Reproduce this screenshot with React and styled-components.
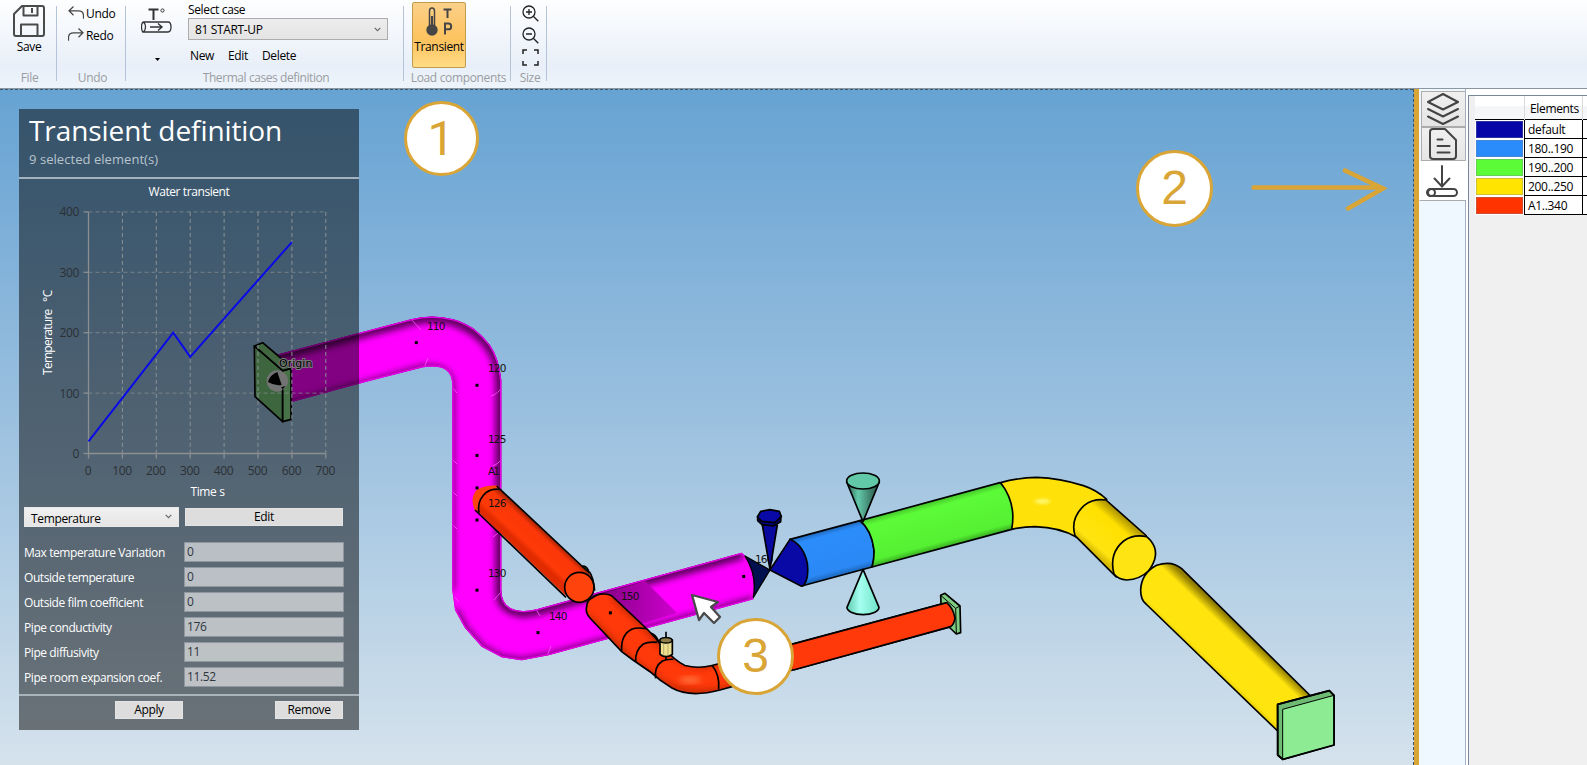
import React from "react";
import styled, { createGlobalStyle } from "styled-components";

const GlobalStyle = createGlobalStyle`
  * { box-sizing: border-box; }
  html, body { margin: 0; padding: 0; overflow: hidden; }
  body {
    font-family: "Open Sans", "Noto Sans", sans-serif;
    font-size: 12px;
    letter-spacing: -0.35px;
    color: #000;
    background: #f0f0f0;
  }
  button, input { font: inherit; letter-spacing: inherit; }
`;

const GOLD = "#d9a536";

const Window = styled.div`
  width: 1587px;
  height: 765px;
  display: flex;
  flex-direction: column;
  overflow: hidden;
`;

/* ---------- Ribbon ---------- */

const Ribbon = styled.header`
  height: 89px;
  flex: none;
  display: flex;
  background: linear-gradient(#fdfefe 0, #f4f7fc 35%, #e8eff8 75%, #eef4fb 100%);
  border-bottom: 1px solid #8d979f;
`;

const RibbonGroup = styled.section`
  position: relative;
  width: ${(p) => p.$width}px;
  height: 87px;
  display: flex;
  flex-direction: column;
  background: linear-gradient(#b4c3d8, #b4c3d8) right 6px / 1px 75px no-repeat;
`;

const GroupBody = styled.div`
  height: 69px;
  display: flex;
  padding: ${(p) => p.$pad || "0"};
`;

const GroupLabel = styled.div`
  padding-left: 2px;
  line-height: 18px;
  text-align: center;
  white-space: nowrap;
  color: #9a9da1;
  letter-spacing: ${(p) => p.$spacing || "-0.35px"};
`;

const SaveButton = styled.button`
  flex: 1;
  display: flex;
  flex-direction: column;
  align-items: center;
  border: 0;
  padding: 5px 0 0 1px;
  background: none;
  line-height: 20px;
`;

const Stack = styled.div`
  display: flex;
  flex-direction: column;
  align-items: ${(p) => p.$align || "stretch"};
  gap: ${(p) => p.$gap || 0}px;
`;

const InlineCommand = styled.div`
  display: flex;
  align-items: center;
  gap: 2px;
  height: 20px;
`;

const CaseIcon = styled.div`
  width: 62px;
  padding: 8px 0 0 15px;
  display: flex;
  flex-direction: column;
  gap: 24px;
`;

const CaseCaption = styled.div`
  height: 18px;
  padding-top: 1px;
  line-height: 18px;
`;

const CaseSelect = styled.div`
  width: 200px;
  height: 22px;
  display: flex;
  align-items: center;
  justify-content: space-between;
  padding: 0 6px;
  border: 1px solid #acacac;
  background: linear-gradient(#ededed, #e4e4e4);
`;

const CaseActions = styled.div`
  display: flex;
  gap: 14px;
  padding: 7px 0 0 2px;
  line-height: 18px;
`;

const ToggleButton = styled.button`
  width: 54px;
  height: 66px;
  display: flex;
  flex-direction: column;
  align-items: center;
  padding: 4px 0 0;
  border: 1px solid #c29b4d;
  border-radius: 2px;
  background: linear-gradient(#fbd08a, #fdc566 45%, #fdc35f 60%, #ffdc86);
  line-height: 20px;
`;

/* ---------- Workspace ---------- */

const Workspace = styled.main`
  flex: 1;
  display: flex;
  min-height: 0;
`;

const Viewport = styled.div`
  position: relative;
  width: 1414px;
  border-right: 1px dashed #3b5064;
  background: linear-gradient(#66a3d3 0%, #8ab6db 33%, #b0cde4 68%, #d5e2ec 100%);
  &::before {
    content: "";
    position: absolute;
    inset: 0 0 auto 0;
    border-top: 1px dashed #3f566b;
  }
`;

const Scene = styled.svg`
  display: block;
  width: 1413px;
  height: 676px;
`;

const Splitter = styled.div`
  width: 5px;
  background: ${GOLD};
`;

const TabStrip = styled.nav`
  width: 47px;
  padding: 2px 0 0;
  background: #eff7ff;
  border-right: 1px solid #a5afbd;
`;

const SideTab = styled.div`
  height: ${(p) => p.$height}px;
  display: flex;
  align-items: center;
  justify-content: center;
  padding-right: 2px;
  margin-left: ${(p) => (p.$active ? 0 : 2)}px;
  margin-right: ${(p) => (p.$active ? -1 : 0)}px;
  border: 1px solid #acacac;
  border-left-color: ${(p) => (p.$active ? "#fff" : "#acacac")};
  border-right: 0;
  border-top-color: ${(p) => (p.$active ? "#fff" : "#acacac")};
  background: ${(p) => (p.$active ? "#fff" : "linear-gradient(#f0f0f0, #e5e5e5)")};
`;

const LegendPane = styled.aside`
  flex: 1;
  padding: 6px 0 0 2px;
  background: #fff;
`;

const LegendFrame = styled.div`
  height: 100%;
  padding-left: 6px;
  border-left: 1px solid #77889b;
  border-top: 1px solid #77889b;
  background: #f0f0f0;
`;

const LegendTable = styled.div`
  width: 112px;
  background: #fff;
`;

const LegendHeader = styled.div`
  display: grid;
  grid-template-columns: 50px 58px 4px;
  height: 23px;
  line-height: 26px;
  background: linear-gradient(#fff 45%, #f4f5f7 46%, #f7f8fa);
  > * { border-right: 1px solid #d8dadd; padding-left: 5px; }
  > :last-child { border-right: 0; }
`;

const LegendRow = styled.div`
  display: grid;
  grid-template-columns: 50px 58px 4px;
  height: 19px;
  line-height: 19px;
  border-top: 1px solid #000;
  &:last-child { height: 20px; border-bottom: 1px solid #000; }
  > * { border-right: 1px solid #000; }
  > :last-child { border-right: 0; }
`;

const SwatchCell = styled.div`
  display: grid;
`;

const Swatch = styled.div`
  background: ${(p) => p.$color};
  border: 1px solid #fff;
  box-shadow: inset 0 0 0 1px rgba(120, 130, 140, 0.35);
`;

const LegendName = styled.div`
  padding-left: 3px;
  letter-spacing: -0.3px;
`;

/* ---------- Transient panel ---------- */

const Panel = styled.section`
  position: absolute;
  left: 19px;
  top: 20px;
  width: 340px;
  height: 621px;
  display: flex;
  flex-direction: column;
  background: rgba(0, 0, 0, 0.49);
  color: #fff;
`;

const PanelHeader = styled.div`
  height: 70px;
  padding: 0 10px;
  border-bottom: 2px solid #a3b3c0;
`;

const PanelTitle = styled.h1`
  margin: 0;
  font-size: 28px;
  font-weight: 400;
  line-height: 42px;
  letter-spacing: -0.08px;
  white-space: nowrap;
`;

const PanelSubtitle = styled.div`
  font-size: 13px;
  line-height: 16px;
  letter-spacing: 0.05px;
  color: #b9c3cc;
`;

const Chart = styled.svg`
  display: block;
  width: 340px;
  height: 327px;
  flex: none;
`;

const ControlsRow = styled.div`
  display: grid;
  grid-template-columns: 155px 158px;
  align-items: center;
  gap: 6px;
  padding: 1px 0 0 5px;
`;

const KindSelect = styled.div`
  height: 20px;
  display: flex;
  justify-content: space-between;
  padding: 1px 6px 0;
  line-height: 20px;
  overflow: hidden;
  color: #000;
  border: 1px solid #e8e8e8;
  background: linear-gradient(#f0f0f0, #e5e5e5);
  > svg { margin-top: 5px; }
`;

const PlainButton = styled.button`
  width: ${(p) => (p.$width ? p.$width + "px" : "auto")};
  height: 18px;
  padding: 0;
  border: 1px solid #e4e4e4;
  background: #dddddd;
  color: #000;
  line-height: 16px;
`;

const Fields = styled.div`
  display: grid;
  grid-template-columns: 160px 160px;
  grid-auto-rows: 20px;
  row-gap: 5px;
  padding: 15px 0 0 5px;
`;

const FieldLabel = styled.label`
  line-height: 22px;
  white-space: nowrap;
  letter-spacing: -0.42px;
`;

const FieldValue = styled.div`
  padding-left: 2px;
  border: 1px solid #8f98a1;
  background: rgba(255, 255, 255, 0.58);
  color: #2f363d;
  line-height: 18px;
`;

const PanelFooter = styled.div`
  display: flex;
  justify-content: space-between;
  height: 36px;
  margin-top: 7px;
  padding: 5px 16px 0 96px;
  border-top: 2px solid #a9b3ba;
`;

/* ---------- Annotations ---------- */

const Callout = styled.div`
  position: absolute;
  left: ${(p) => p.$x - p.$size / 2}px;
  top: ${(p) => p.$y - p.$size / 2}px;
  width: ${(p) => p.$size}px;
  height: ${(p) => p.$size}px;
  display: flex;
  align-items: center;
  justify-content: center;
  border: 3px solid ${GOLD};
  border-radius: 50%;
  background: #fff;
  color: ${GOLD};
  font-family: ${(p) => (p.$plain ? "Roboto" : '"Liberation Sans"')}, Arial, sans-serif;
  font-size: 48px;
  line-height: 1;
  letter-spacing: 0;
`;

const Arrow = styled.svg`
  position: absolute;
  left: 1249px;
  top: 76px;
`;

/* ---------- Icons ---------- */

const SaveIcon = () => (
  <svg width="32" height="32" viewBox="0 0 32 32" fill="none" stroke="#4a4a4a" strokeWidth="2" strokeLinejoin="round">
    <path d="M9 1h20q2 0 2 2v26q0 2-2 2H3q-2 0-2-2V9z" />
    <path d="M10.500 1v9.500h14V1M19 3v5M8 31V19.500h16.500V31" />
  </svg>
);

const UndoIcon = ({ redo }) => (
  <svg width="16" height="14" viewBox="0 0 16 14" fill="none" stroke="#444" strokeWidth="1.200">
    <path transform={redo ? "translate(16 0) scale(-1 1)" : undefined} d="M5.500 .5 1 4.800l4.500 4.400M1 4.800h9.500q5 0 5 5v3" />
  </svg>
);

const CaseGlyph = () => (
  <svg width="31" height="26" viewBox="0 0 31 26" fill="none" stroke="#333">
    <path d="M7.500 1.500h10M12.500 1v11" strokeWidth="2" />
    <circle cx="21.500" cy="2.500" r="1.600" strokeWidth="1" />
    <path d="M2.500 14H27q3 0 3 5t-3 5H2.500q2-2 2-5t-2-5q-2 .5-2 5t2 5" strokeWidth="1.300" />
    <path d="M9 19h12M17 15.500l4 3.500-4 3.500" strokeWidth="1.400" />
  </svg>
);

const CaretIcon = () => (
  <svg width="31" height="4">
    <path d="M14 0h5l-2.500 3z" />
  </svg>
);

const Chevron = () => (
  <svg width="7" height="5" viewBox="0 0 7 5" fill="none" stroke="#666" strokeWidth="1.100">
    <path d="M.7.8 3.500 3.600 6.300.8" />
  </svg>
);

const TransientIcon = () => (
  <svg width="27" height="30" viewBox="0 0 27 30" fill="none" stroke="#454545">
    <path d="M3.500 19V4q0-3 2.500-3t2.500 3v15" strokeWidth="1.500" />
    <path d="M6 9v12" strokeWidth="2.200" />
    <circle cx="6" cy="23" r="5.700" fill="#454545" stroke="none" />
    <path d="M17.500 2.500h8M21.500 2v9" strokeWidth="2" />
    <path d="M19 27.500V16.500h3.500q2.700 0 2.700 2.900t-2.700 2.900H19" strokeWidth="2" />
  </svg>
);

const ZoomIcon = ({ plus }) => (
  <svg width="17" height="17" viewBox="0 0 17 17" fill="none" stroke="#222" strokeWidth="1.300">
    <circle cx="7" cy="7" r="6" />
    <path d={plus ? "M11.300 11.300l5 5M4 7h6M7 4v6" : "M11.300 11.300l5 5M4 7h6"} />
  </svg>
);

const FitIcon = () => (
  <svg width="17" height="17" viewBox="0 0 17 17" fill="none" stroke="#222" strokeWidth="1.500">
    <path d="M1 5V1h4M12 1h4v4M16 12v4h-4M5 16H1v-4" />
  </svg>
);

const LayersIcon = () => (
  <svg width="34" height="32" viewBox="0 0 34 32" fill="none" stroke="#444" strokeWidth="2" strokeLinejoin="round" strokeLinecap="round">
    <path d="M17 1 32 9 17 16.500 2 9zM2 16l15 7.500L32 16M2 23.500 17 31l15-7.500" />
  </svg>
);

const NoteIcon = () => (
  <svg width="28" height="32" viewBox="0 0 28 32" fill="none" stroke="#444" strokeWidth="2" strokeLinejoin="round" strokeLinecap="round">
    <path d="M4 1h12l11 11v16q0 3-3 3H4q-3 0-3-3V4q0-3 3-3zM8.500 11.500h5M8.500 18h12M8.500 24.500h12" />
  </svg>
);

const LoadIcon = () => (
  <svg width="32" height="32" viewBox="0 0 32 32" fill="none" stroke="#444" strokeWidth="2" strokeLinecap="round">
    <path d="M16 1v20M8.500 13.500 16 21.500l7.500-8" />
    <rect x="1" y="24" width="30" height="7" rx="3.500" />
    <circle cx="5.500" cy="27.500" r="3.500" />
  </svg>
);

/* ---------- Chart ---------- */

const X_TICKS = [0, 100, 200, 300, 400, 500, 600, 700];
const Y_TICKS = [0, 100, 200, 300, 400];
const SERIES = [[0, 20], [250, 200], [300, 160], [600, 350]];
const sx = (v) => 69.5 + v * 0.339;
const sy = (v) => 274.5 - v * 0.604;

const TransientChart = () => (
  <Chart viewBox="0 0 340 327" fontSize="12">
    <text x="170" y="17" textAnchor="middle" fill="#fff" fontWeight="500" textLength="81">Water transient</text>
    <g stroke="#8b9294" strokeDasharray="4 3">
      {X_TICKS.slice(1).map((v) => <path key={v} d={`M${sx(v)} ${sy(400)}V${sy(0)}`} />)}
      {Y_TICKS.slice(1).map((v) => <path key={v} d={`M${sx(0)} ${sy(v)}H${sx(700)}`} opacity=".7" />)}
    </g>
    <g stroke="#8b8f91" strokeWidth="1.300">
      <path d={`M${sx(0)} ${sy(400)}V${sy(0)}H${sx(700)}`} fill="none" />
      {X_TICKS.map((v) => <path key={v} d={`M${sx(v)} ${sy(0)}v5`} />)}
      {Y_TICKS.map((v) => <path key={v} d={`M${sx(0)} ${sy(v)}h-5`} />)}
    </g>
    <g fill="#2b3035" letterSpacing="-0.350">
      {X_TICKS.map((v) => <text key={v} x={sx(v) - 0.5} y="296" textAnchor="middle">{v}</text>)}
      {Y_TICKS.map((v) => <text key={v} x="60" y={sy(v) + 4.5} textAnchor="end">{v}</text>)}
    </g>
    <polyline fill="none" stroke="#0a0ae8" strokeWidth="2" points={SERIES.map(([t, c]) => `${sx(t)},${sy(c)}`).join(" ")} />
    <g fill="#fff" fontWeight="500">
      <text x="188.500" y="317" textAnchor="middle" textLength="34">Time s</text>
      <text transform="translate(33 196) rotate(-90)" textLength="66">Temperature</text>
      <text transform="translate(33 123) rotate(-90)" textLength="12">°C</text>
    </g>
  </Chart>
);

/* ---------- Piping model ---------- */

const MAIN_RUN =
  "M272 356 370 330 411 319.300Q431.700 313.500 453.300 319.300 463 322 473.300 328.300 482 335 490 345 499 358 501.300 380V590Q501.500 609 520 610.700 528 611.500 536.700 609.300L741.700 552.700Q750 558 754 575 756 590 753.300 599.300L548.300 655.300 521.700 660.300 501.700 657.300 481.700 646.700 465 628 455 610 452.300 590V384Q451.700 368 436 366.700 430 366 423 367.300L370 380.700 286 403.500Z";

const BRANCH =
  "M586.700 606.700Q587 600 592 598 598 593.500 604 594 610 594 613 597L648 630Q655 637 661 645 675 661 685 665.500 698 669 712 665.500L946.700 602.700Q952 606 955 617 954 624 950.700 626.700L720 690Q690 698 672 688 660 681 650 671.700L633 660 621.700 651.700 590 618Q585 612 586.700 606.700Z";

const LABELS = [
  ["110", 427, 330], ["120", 488, 372], ["125", 488, 443], ["A1", 488, 475],
  ["126", 488, 507], ["130", 488, 577], ["140", 549, 620], ["150", 621, 600],
];

const NODES = [[416.3, 342.6], [477, 385.3], [477, 455.4], [477, 487.9], [477, 520], [477, 590.2], [538, 632.6], [610.4, 612.8], [743.7, 576.5]];

const PipingModel = () => (
  <Scene viewBox="0 89 1413 676">
    <defs>
      <filter id="soft" x="-20%" y="-20%" width="140%" height="140%"><feGaussianBlur stdDeviation="3" /></filter>
      <filter id="softWide" x="-50%" y="-50%" width="200%" height="200%"><feGaussianBlur stdDeviation="5" /></filter>
      <clipPath id="mainClip"><path d={MAIN_RUN} /></clipPath>
      <clipPath id="branchClip"><path d={BRANCH} /></clipPath>
      <linearGradient id="shadow" x1="0" x2="1"><stop offset="0" stopColor="#7a007a" /><stop offset="1" stopColor="#cf00cf" /></linearGradient>
      <linearGradient id="red" gradientUnits="userSpaceOnUse" x1="290" y1="210" x2="345" y2="150"><stop offset="0" stopColor="#e02b00" /><stop offset=".2" stopColor="#ff3a08" /><stop offset=".75" stopColor="#fb3608" /><stop offset="1" stopColor="#8f1f00" /></linearGradient>
      <linearGradient id="blue" gradientUnits="userSpaceOnUse" x1="415" y1="237" x2="453" y2="378"><stop offset="0" stopColor="#1f66b8" /><stop offset=".12" stopColor="#2b8dfb" /><stop offset=".85" stopColor="#2b88f5" /><stop offset="1" stopColor="#1a62b4" /></linearGradient>
      <linearGradient id="green" gradientUnits="userSpaceOnUse" x1="720" y1="155" x2="758" y2="295"><stop offset="0" stopColor="#45c42a" /><stop offset=".14" stopColor="#5cfb38" /><stop offset=".86" stopColor="#55f032" /><stop offset="1" stopColor="#37a820" /></linearGradient>
      <linearGradient id="yellow" gradientUnits="userSpaceOnUse" x1="690" y1="650" x2="790" y2="545"><stop offset="0" stopColor="#e6cb00" /><stop offset=".1" stopColor="#ffe510" /><stop offset=".8" stopColor="#ffe40d" /><stop offset="1" stopColor="#917e00" /></linearGradient>
      <linearGradient id="yellowShort" gradientUnits="userSpaceOnUse" x1="345" y1="310" x2="437" y2="204"><stop offset="0" stopColor="#d8bb00" /><stop offset=".15" stopColor="#ffe410" /><stop offset=".75" stopColor="#ffe000" /><stop offset="1" stopColor="#aa9200" /></linearGradient>
      <linearGradient id="coneTop" x1="0" x2="1"><stop offset="0" stopColor="#285b4c" /><stop offset=".35" stopColor="#63c8a9" /><stop offset="1" stopColor="#254d42" /></linearGradient>
      <linearGradient id="coneBottom" x1="0" x2="1"><stop offset="0" stopColor="#5fcbb0" /><stop offset=".4" stopColor="#a5fff0" /><stop offset="1" stopColor="#71e2c8" /></linearGradient>
    </defs>

    {/* main run */}
    <path d={MAIN_RUN} fill="#ff00ff" />
    <g clipPath="url(#mainClip)" fill="none">
      <path d="M272 356 370 330 411 319.300Q431.700 313.500 453.300 319.300 482 330 493 350 501.700 363 501.700 385V590Q501 607 520 610.700 528 611.500 536.700 609.300L741.700 552.700" stroke="#600060" strokeWidth="13" filter="url(#soft)" />
      <path d="M286 404.500 370 381.700 423 367.300Q449 365 452 384V590" stroke="#800080" strokeWidth="6" filter="url(#soft)" />
      <path d="M753 600 548.300 656.300 521.700 661.300 501.700 658.300 481.700 647.700 465 629 455 610" stroke="#800080" strokeWidth="8" filter="url(#soft)" />
      <path d="M590 598 645 581 677 613 624 629Z" fill="url(#shadow)" />
      <path d="M411 319 421 330M428 358 424 368M452 387 457 393M491 396Q498 394 502 387M452 459 457 464M493 466Q498 464 502 459M452 491 457 496M452 524 457 529M493 537 502 530M452 594 459 602M494 600 501 592M536 609 540 616M551 646 547 656" stroke="#ff55ff" strokeWidth="1" opacity=".8" />
      <path d={MAIN_RUN} stroke="#e600e6" strokeWidth="2.600" />
    </g>

    {/* origin anchor */}
    <g transform="translate(0 300) scale(.33333)" stroke="#000" strokeWidth="5" strokeLinejoin="round">
      <path d="M763 138 848 212V365L765 290Z" fill="#78c97d" />
      <path d="M848 212 873 205V358L848 365Z" fill="#8ce08c" />
      <path d="M763 138 788 128 835 168 873 205 848 212Z" fill="#80ca80" />
      <circle cx="832" cy="243" r="32" fill="#e2e2e2" stroke="none" />
      <path d="M832 216Q810 224 804 246 822 258 845 255Z" fill="#000" stroke="none" />
      <path d="M843 262 857 258 848 268Z" fill="#000" stroke="none" />
      <path d="M848 268V365" strokeWidth="3" />
    </g>
    <text x="279" y="367" fontFamily="DejaVu Sans, sans-serif" fontSize="11" textLength="33" stroke="#eee" strokeWidth="2" paintOrder="stroke">Origin</text>

    {/* upper branch */}
    <g transform="translate(430 480) scale(.33333)" stroke="#000" strokeWidth="5" strokeLinejoin="round" fill="none">
      <path d="M135 92Q118 55 140 30 165 15 205 17L215 40 160 100Z" fill="#ff430c" stroke="none" />
      <path d="M450 262Q470 250 478 280" fill="#266855" />
      <path d="M147 98Q140 62 168 38 185 25 210 28L478 281Q492 293 490 325L480 355 405 345Z" fill="url(#red)" stroke="none" />
      <path d="M135 90 408 352M200 18 478 279M147 98Q140 62 168 38 185 25 210 28" />
      <ellipse cx="448" cy="322" rx="44" ry="45" fill="#ff430c" />
      <path d="M478 275Q490 290 494 332" />
    </g>

    {/* lower branch */}
    <g transform="translate(430 480) scale(.33333)" stroke="#000" strokeWidth="5">
      <path d="M648 458Q680 455 690 498L665 490Z" fill="#6fd8ae" />
    </g>
    <path d={BRANCH} fill="#ff390a" />
    <g clipPath="url(#branchClip)" fill="none">
      <path d="M613 596 648 629 661 644Q683 665 705 665L950 601" stroke="#a82300" strokeWidth="5" filter="url(#soft)" />
      <path d="M588 617 633 662 655 677Q676 697 720 691L950 628" stroke="#b52800" strokeWidth="5" filter="url(#soft)" />
      <ellipse cx="690" cy="680" rx="11" ry="3" fill="#ff7a45" filter="url(#soft)" />
    </g>
    <path d={BRANCH} fill="none" stroke="#000" strokeWidth="1.700" />
    <g transform="translate(430 480) scale(.33333)" fill="none" stroke="#000" strokeWidth="5">
      <path d="M575 513Q572 465 605 448 620 441 648 446M617 546Q615 510 640 492 655 484 682 487M677 595Q672 560 697 543 710 537 730 538" />
      <path d="M846 556Q870 585 866 628" />
      <path d="M708 455V480M708 525V540" />
      <path d="M690 480V523Q708 537 727 523V480Q708 465 690 480Z" fill="#eee090" />
      <ellipse cx="708" cy="481" rx="18" ry="8" fill="#8c7e46" strokeWidth="4" />
      <path d="M701 490V527M714 490V527" stroke="#9f955c" strokeWidth="2" />
    </g>

    <text x="755" y="563" fontFamily="DejaVu Sans, sans-serif" fontSize="10.500" fill="#111" textLength="18">160</text>

    {/* valve, reducers and straight pipes */}
    <g transform="translate(690 450) scale(.33333)" stroke="#000" strokeWidth="5" strokeLinejoin="round">
      <path d="M752 436 765 430 810 468 812 548 799 552 755 510Z" fill="#7dcc82" />
      <path d="M752 436 797 475 799 552M797 475 810 468" fill="none" strokeWidth="3" />
      <path d="M310 582 770 458Q790 475 795 505 792 523 782 530L310 660Z" fill="#ff390a" stroke="none" />
      <path d="M310 582 770 458Q790 475 795 505 792 523 782 530L310 660" fill="none" />
      <path d="M165 318 240 360 190 442Q202 375 165 318Z" fill="#00104f" strokeWidth="4" />
      <path d="M217 225H262L240 358Z" fill="#0909a0" />
      <path d="M203 200V212L216 224 250 228 272 215 273 198Z" fill="#000080" />
      <path d="M202 201 212 184 240 179 268 184 274 200 254 218 216 214Z" fill="#0909a8" />
      <path d="M300 268 510 212Q545 240 552 300 553 330 546 351L335 408Z" fill="url(#blue)" />
      <path d="M240 360 300 268Q340 285 352 340 358 385 340 407L333 408Z" fill="#0909a5" />
      <path d="M510 212 930 98Q960 120 970 175 975 220 965 238L546 351Q553 330 552 300 545 240 510 212Z" fill="url(#green)" />
      <path d="M470 96 519 215 568 96Z" fill="url(#coneTop)" />
      <ellipse cx="519" cy="93" rx="49" ry="24" fill="#62c9a8" />
      <path d="M519 358 471 472A48 22 0 0 0 567 472Z" fill="url(#coneBottom)" />
    </g>

    {/* far end of the line */}
    <g transform="translate(980 450) scale(.33333)" stroke="#000" strokeWidth="5" strokeLinejoin="round">
      <path d="M62 98Q115 83 170 82 240 84 310 107 350 120 380 148L290 262Q240 232 165 230 130 230 95 238 110 160 62 98Z" fill="#ffe10a" />
      <ellipse cx="187" cy="154" rx="24" ry="7" fill="#fff870" stroke="none" filter="url(#softWide)" />
      <path d="M285 257Q270 205 313 166 340 145 378 150L500 258 410 382Z" fill="url(#yellowShort)" stroke="none" />
      <path d="M410 382 285 257Q270 205 313 166 340 145 378 150L500 258" fill="none" />
      <path d="M402 372Q386 310 431 273 460 252 500 260 535 290 524 328 517 350 505 363 480 388 440 390 415 388 402 372Z" fill="#ffe414" />
      <path d="M893 843 498 462Q482 450 482 420 484 370 530 346 575 330 605 356L992 738 893 765Z" fill="url(#yellow)" />
      <path d="M893 763 1048 722 1062 736 1062 885 908 928 893 915Z" fill="#6fba73" />
      <path d="M908 778 1062 736V885L908 928Z" fill="#8dec93" strokeWidth="3" />
      <path d="M893 763 1048 722 1062 736V885L908 928 893 915Z" fill="none" />
    </g>

    {/* node marks */}
    {NODES.map(([x, y]) => <rect key={`${x}-${y}`} x={x - 1.5} y={y - 1.5} width="3" height="3" />)}
    <g fontFamily="DejaVu Sans, sans-serif" fontSize="10.500" fill="#111">
      {LABELS.map(([t, x, y]) => <text key={t} x={x} y={y} textLength={t.length === 2 ? 11.5 : 18}>{t}</text>)}
    </g>

    {/* pointer */}
    <path d="M692 595 718 602 711 607 720 617 714 623 704 613 699 620Z" fill="#fff" stroke="#4a4a4a" strokeWidth="2.300" strokeLinejoin="round" />
  </Scene>
);

/* ---------- Data ---------- */

const FIELDS = [
  ["Max temperature Variation", "0"],
  ["Outside temperature", "0"],
  ["Outside film coefficient", "0"],
  ["Pipe conductivity", "176"],
  ["Pipe diffusivity", "11"],
  ["Pipe room expansion coef.", "11.52"],
];

const LEGEND = [
  ["default", "#0505a8"],
  ["180..190", "#2a8bfb"],
  ["190..200", "#5bfb38"],
  ["200..250", "#ffe400"],
  ["A1..340", "#ff3300"],
];

export default function App() {
  return (
    <Window>
      <GlobalStyle />
      <Ribbon>
        <RibbonGroup $width={57}>
          <GroupBody>
            <SaveButton><SaveIcon />Save</SaveButton>
          </GroupBody>
          <GroupLabel>File</GroupLabel>
        </RibbonGroup>
        <RibbonGroup $width={69}>
          <GroupBody $pad="3px 0 0 11px">
            <Stack $gap={2}>
              <InlineCommand><UndoIcon />Undo</InlineCommand>
              <InlineCommand><UndoIcon redo />Redo</InlineCommand>
            </Stack>
          </GroupBody>
          <GroupLabel>Undo</GroupLabel>
        </RibbonGroup>
        <RibbonGroup $width={278}>
          <GroupBody>
            <CaseIcon>
              <CaseGlyph />
              <CaretIcon />
            </CaseIcon>
            <div>
              <CaseCaption>Select case</CaseCaption>
              <CaseSelect>81 START-UP<Chevron /></CaseSelect>
              <CaseActions><span>New</span><span>Edit</span><span>Delete</span></CaseActions>
            </div>
          </GroupBody>
          <GroupLabel $spacing="-0.42px">Thermal cases definition</GroupLabel>
        </RibbonGroup>
        <RibbonGroup $width={107}>
          <GroupBody $pad="2px 0 0 8px">
            <ToggleButton><TransientIcon />Transient</ToggleButton>
          </GroupBody>
          <GroupLabel $spacing="-0.35px">Load components</GroupLabel>
        </RibbonGroup>
        <RibbonGroup $width={36}>
          <GroupBody $pad="5px 0 0 11px">
            <Stack $gap={5}><ZoomIcon plus /><ZoomIcon /><FitIcon /></Stack>
          </GroupBody>
          <GroupLabel>Size</GroupLabel>
        </RibbonGroup>
      </Ribbon>

      <Workspace>
        <Viewport>
          <PipingModel />
          <Panel>
            <PanelHeader>
              <PanelTitle>Transient definition</PanelTitle>
              <PanelSubtitle>9 selected element(s)</PanelSubtitle>
            </PanelHeader>
            <TransientChart />
            <ControlsRow>
              <KindSelect>Temperature<Chevron /></KindSelect>
              <PlainButton>Edit</PlainButton>
            </ControlsRow>
            <Fields>
              {FIELDS.map(([name, value]) => (
                <React.Fragment key={name}>
                  <FieldLabel>{name}</FieldLabel>
                  <FieldValue>{value}</FieldValue>
                </React.Fragment>
              ))}
            </Fields>
            <PanelFooter>
              <PlainButton $width={68}>Apply</PlainButton>
              <PlainButton $width={68}>Remove</PlainButton>
            </PanelFooter>
          </Panel>
          <Callout $x={441} $y={49.5} $size={75} $plain>1</Callout>
          <Callout $x={1174.5} $y={99} $size={77}>2</Callout>
          <Callout $x={755.5} $y={567} $size={77}>3</Callout>
          <Arrow width="140" height="50" fill="none" stroke={GOLD} strokeWidth="4.500" strokeLinecap="round">
            <path d="M4.500 22.500H130M96 5.500 134 23.500 99 43.500" />
          </Arrow>
        </Viewport>
        <Splitter />
        <TabStrip>
          <SideTab $height={36}><LayersIcon /></SideTab>
          <SideTab $height={34}><NoteIcon /></SideTab>
          <SideTab $height={40} $active><LoadIcon /></SideTab>
        </TabStrip>
        <LegendPane>
          <LegendFrame>
            <LegendTable>
              <LegendHeader><span /><span>Elements</span><span /></LegendHeader>
              {LEGEND.map(([name, color]) => (
                <LegendRow key={name}>
                  <SwatchCell><Swatch $color={color} /></SwatchCell>
                  <LegendName>{name}</LegendName>
                  <span />
                </LegendRow>
              ))}
            </LegendTable>
          </LegendFrame>
        </LegendPane>
      </Workspace>
    </Window>
  );
}
